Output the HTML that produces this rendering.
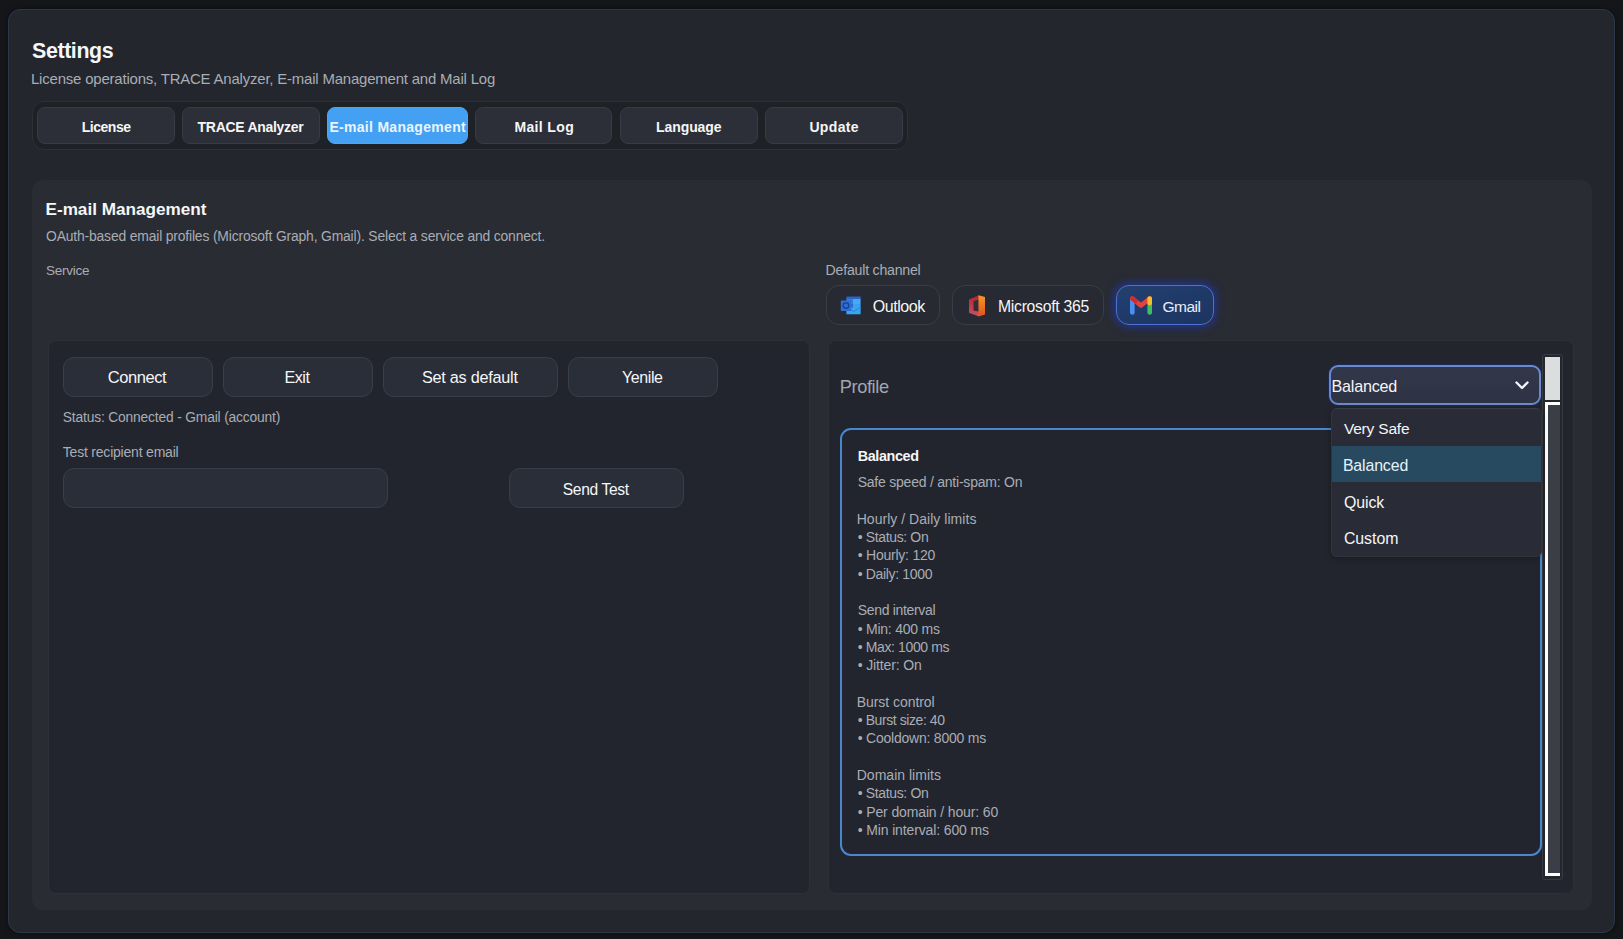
<!DOCTYPE html>
<html><head><meta charset="utf-8">
<style>
*{box-sizing:border-box;margin:0;padding:0}
html,body{width:1623px;height:939px;overflow:hidden;background:#151619;font-family:"Liberation Sans",sans-serif;}
.a{position:absolute}
.t{position:absolute;white-space:nowrap;line-height:1}
#main{left:8px;top:9px;width:1607px;height:924px;border-radius:12px;background:#23262d;border:1px solid #2d374b;box-shadow:0 0 4px rgba(0,0,0,.5)}
#tabs{left:31.5px;top:101px;width:876.5px;height:49px;border-radius:12px;background:#1e2126;border:1px solid #2d3037}
.tab{position:absolute;top:107px;height:37px;border-radius:8px;background:#2c2f37;border:1px solid #383b43}
.tab.on{background:#44a0f3;border-color:#4ba6f5}
#sec{left:32px;top:180px;width:1560px;height:730px;border-radius:10px;background:#292c33}
.sub{position:absolute;top:340px;height:553.5px;border-radius:8px;background:#22252d;border:1px solid #2d3038}
.btn{position:absolute;top:357px;height:40px;border-radius:11px;background:#2a2e38;border:1px solid #3a3e48}
.pill{position:absolute;top:285px;height:40px;border-radius:13px;background:#272a32;border:1px solid #3a3d46}
</style></head><body>
<div class="a" id="main"></div>

<div class="a" id="tabs"></div>
<div class="tab" style="left:37px;width:138px"></div>
<div class="tab" style="left:182px;width:138px"></div>
<div class="tab on" style="left:327px;width:141px"></div>
<div class="tab" style="left:475px;width:137px"></div>
<div class="tab" style="left:620px;width:138px"></div>
<div class="tab" style="left:765px;width:138px"></div>

<div class="a" id="sec"></div>

<!-- pills -->
<div class="pill" style="left:826px;width:114px"></div>
<div class="pill" style="left:952px;width:152px"></div>
<div class="pill" style="left:1116px;width:98px;background:linear-gradient(160deg,#22406e,#1d3462);border:1.5px solid #4d72d2;box-shadow:0 0 9px 2px rgba(30,60,225,.55)"></div>
<svg class="a" style="left:838px;top:294px" width="26" height="24" viewBox="0 0 26 24">
 <rect x="8.5" y="2.7" width="14" height="17.5" fill="#1f5fc4"/>
 <rect x="8.5" y="2.7" width="14" height="2.5" fill="#2c63c8"/>
 <rect x="15" y="5" width="7.5" height="5" fill="#4aa8ee"/>
 <rect x="8.5" y="5" width="6.5" height="5" fill="#2f7fde"/>
 <rect x="15" y="10" width="7.5" height="5" fill="#3ba3ee"/>
 <rect x="8.5" y="10" width="6.5" height="5" fill="#1d6fd8"/>
 <path d="M8.5 13.5 L22.5 13.5 L22.5 20.2 L8.5 20.2 Z" fill="#3aa6ec"/>
 <path d="M8.5 13.5 L15.5 17.5 L22.5 13.5" fill="none" stroke="#2b7fd6" stroke-width="1"/>
 <rect x="2.8" y="6.5" width="10.5" height="10.5" rx="0.8" fill="#2e6fd0"/>
 <circle cx="8" cy="11.6" r="2.8" fill="none" stroke="#163f9a" stroke-width="1.3"/>
</svg>
<svg class="a" style="left:966px;top:293px" width="22" height="26" viewBox="0 0 22 26">
 <defs>
  <linearGradient id="ofr" x1="0" y1="0" x2="0" y2="1"><stop offset="0" stop-color="#f29a2a"/><stop offset="1" stop-color="#e2521c"/></linearGradient>
  <linearGradient id="ofl" x1="0" y1="0" x2="0" y2="1"><stop offset="0" stop-color="#b3262a"/><stop offset="1" stop-color="#c9506e"/></linearGradient>
 </defs>
 <path d="M3 6.5 L13 2.3 L13 23.5 L3 19.8 Z" fill="url(#ofl)"/>
 <path d="M7.5 8 L13 6.5 L13 18.5 L7.5 17.5 Z" fill="#3a2a33"/>
 <path d="M12.5 2.3 L19 4 L19 21.5 L12.5 23.5 Z" fill="url(#ofr)"/>
</svg>
<svg class="a" style="left:1127px;top:294px" width="28" height="24" viewBox="0 0 28 24">
 <path d="M5.3 4.5 L14 11.5 L22.7 4.5" fill="none" stroke="#e8413b" stroke-width="4.6" stroke-linecap="round" stroke-linejoin="round"/>
 <path d="M5.3 5 L5.3 18.5" fill="none" stroke="#4a90ee" stroke-width="4.6" stroke-linecap="round"/>
 <path d="M22.7 5 L22.7 18.5" fill="none" stroke="#3fbf62" stroke-width="4.6" stroke-linecap="round"/>
 <path d="M22.7 4.5 L22.7 9" fill="none" stroke="#f5c02c" stroke-width="4.6" stroke-linecap="round"/>
 <path d="M5.3 4.5 L8.5 7" fill="none" stroke="#d6282f" stroke-width="4.6" stroke-linecap="round"/>
</svg>

<!-- subpanels -->
<div class="sub" style="left:48px;width:762px"></div>
<div class="sub" style="left:828px;width:746px"></div>

<!-- left buttons -->
<div class="btn" style="left:63px;width:150px"></div>
<div class="btn" style="left:223px;width:150px"></div>
<div class="btn" style="left:383px;width:175px"></div>
<div class="btn" style="left:568px;width:150px"></div>
<div class="btn" style="left:63px;top:468px;width:325px;height:40px"></div>
<div class="btn" style="left:509px;top:468px;width:175px;height:40px"></div>

<!-- right panel -->
<div class="a" id="card" style="left:840px;top:428px;width:702px;height:428px;border:2px solid #4787cf;border-radius:11px;background:#22252d"></div>

<!-- select -->
<div class="a" style="left:1329px;top:365px;width:212px;height:40px;border:2px solid #6e88cc;border-radius:9px;background:linear-gradient(#323849,#2d3344);box-shadow:0 0 0 1px rgba(25,45,110,.6)"></div>
<svg class="a" style="left:1514px;top:380px" width="16" height="11" viewBox="0 0 16 11"><path d="M2.5 2.5 L8 8 L13.5 2.5" fill="none" stroke="#f2f4f8" stroke-width="2.4" stroke-linecap="round" stroke-linejoin="round"/></svg>

<!-- scrollbar -->
<div class="a" style="left:1542px;top:354px;width:21px;height:526px;background:#24262b;border:1.5px solid #383a41;border-radius:3px"></div>
<div class="a" style="left:1544.5px;top:357px;width:15.5px;height:43px;background:#dcdddf"></div>
<div class="a" style="left:1545px;top:402px;width:15px;height:474px;background:#3c3e47;border-left:3px solid #fff;border-top:3px solid #fff"></div>
<div class="a" style="left:1545px;top:873px;width:15px;height:3px;background:#fff"></div>

<!-- dropdown -->
<div class="a" style="left:1330.5px;top:408px;width:211px;height:149px;background:#292c36;border:1px solid #31343d;border-top-color:#3a3d47;border-radius:6px;box-shadow:0 2px 6px rgba(0,0,0,.25)"></div>
<div class="a" style="left:1331.5px;top:446px;width:209px;height:36px;background:#274a60"></div>

<div class="t" style="left:32.00px;top:41.00px;font-size:21.40px;letter-spacing:-0.384px;color:#f5f6f8;font-weight:700;">Settings</div>
<div class="t" style="left:31.00px;top:72.00px;font-size:14.94px;letter-spacing:-0.186px;color:#a9adb5;">License operations, TRACE Analyzer, E-mail Management and Mail Log</div>
<div class="t" style="left:81.67px;top:120.00px;font-size:14.00px;letter-spacing:-0.450px;color:#f5f6f8;font-weight:700;">License</div>
<div class="t" style="left:197.60px;top:120.00px;font-size:14.00px;letter-spacing:-0.294px;color:#f5f6f8;font-weight:700;">TRACE Analyzer</div>
<div class="t" style="left:329.40px;top:120.00px;font-size:14.00px;letter-spacing:0.299px;color:#e9f5ff;font-weight:700;">E-mail Management</div>
<div class="t" style="left:514.40px;top:120.00px;font-size:14.00px;letter-spacing:0.368px;color:#f5f6f8;font-weight:700;">Mail Log</div>
<div class="t" style="left:656.00px;top:120.00px;font-size:14.00px;letter-spacing:-0.076px;color:#f5f6f8;font-weight:700;">Language</div>
<div class="t" style="left:809.40px;top:120.00px;font-size:14.00px;letter-spacing:0.348px;color:#f5f6f8;font-weight:700;">Update</div>
<div class="t" style="left:45.50px;top:201.00px;font-size:17.17px;letter-spacing:-0.013px;color:#f5f6f8;font-weight:700;">E-mail Management</div>
<div class="t" style="left:46.00px;top:230.00px;font-size:13.89px;letter-spacing:-0.160px;color:#a9adb5;">OAuth-based email profiles (Microsoft Graph, Gmail). Select a service and connect.</div>
<div class="t" style="left:46.00px;top:264.00px;font-size:13.53px;letter-spacing:-0.258px;color:#a9adb5;">Service</div>
<div class="t" style="left:825.60px;top:263.00px;font-size:14.15px;letter-spacing:-0.223px;color:#a9adb5;">Default channel</div>
<div class="t" style="left:872.66px;top:298.00px;font-size:16.05px;letter-spacing:-0.450px;color:#f5f6f8;">Outlook</div>
<div class="t" style="left:998.00px;top:299.00px;font-size:15.74px;letter-spacing:-0.275px;color:#f5f6f8;">Microsoft 365</div>
<div class="t" style="left:1162.38px;top:299.00px;font-size:15.50px;letter-spacing:-0.450px;color:#e6eefc;">Gmail</div>
<div class="t" style="left:107.80px;top:369.00px;font-size:16.50px;letter-spacing:-0.445px;color:#f5f6f8;">Connect</div>
<div class="t" style="left:284.38px;top:369.00px;font-size:16.20px;letter-spacing:-0.450px;color:#f5f6f8;">Exit</div>
<div class="t" style="left:422.00px;top:369.00px;font-size:16.26px;letter-spacing:-0.266px;color:#f5f6f8;">Set as default</div>
<div class="t" style="left:622.00px;top:370.00px;font-size:15.97px;letter-spacing:-0.402px;color:#f5f6f8;">Yenile</div>
<div class="t" style="left:62.75px;top:411.00px;font-size:13.82px;letter-spacing:-0.171px;color:#a9adb5;">Status: Connected - Gmail (account)</div>
<div class="t" style="left:62.75px;top:445.00px;font-size:14.01px;letter-spacing:-0.204px;color:#a9adb5;">Test recipient email</div>
<div class="t" style="left:562.80px;top:482.00px;font-size:15.62px;letter-spacing:-0.360px;color:#f5f6f8;">Send Test</div>
<div class="t" style="left:839.70px;top:378.00px;font-size:18.21px;letter-spacing:-0.362px;color:#a3a7af;">Profile</div>
<div class="t" style="left:1331.60px;top:378.00px;font-size:16.16px;letter-spacing:-0.255px;color:#f5f6f8;">Balanced</div>
<div class="t" style="left:857.70px;top:449.00px;font-size:14.40px;letter-spacing:-0.385px;color:#f5f6f8;font-weight:700;">Balanced</div>
<div class="t" style="left:1343.90px;top:421.00px;font-size:15.50px;letter-spacing:-0.186px;color:#f5f6f8;">Very Safe</div>
<div class="t" style="left:1342.90px;top:458.00px;font-size:15.90px;letter-spacing:-0.132px;color:#e6f2fb;">Balanced</div>
<div class="t" style="left:1343.90px;top:495.00px;font-size:15.90px;letter-spacing:-0.068px;color:#f5f6f8;">Quick</div>
<div class="t" style="left:1343.90px;top:531.00px;font-size:15.90px;letter-spacing:-0.042px;color:#f5f6f8;">Custom</div>
<div class="t" style="left:857.70px;top:475.00px;font-size:14.00px;letter-spacing:-0.226px;color:#a9adb5;">Safe speed / anti-spam: On</div>
<div class="t" style="left:856.70px;top:512.00px;font-size:14.00px;letter-spacing:0.034px;color:#a9adb5;">Hourly / Daily limits</div>
<div class="t" style="left:857.70px;top:530.00px;font-size:14.00px;letter-spacing:-0.359px;color:#a9adb5;">• Status: On</div>
<div class="t" style="left:857.70px;top:548.00px;font-size:14.00px;letter-spacing:-0.233px;color:#a9adb5;">• Hourly: 120</div>
<div class="t" style="left:857.70px;top:567.00px;font-size:14.00px;letter-spacing:-0.337px;color:#a9adb5;">• Daily: 1000</div>
<div class="t" style="left:857.70px;top:603.00px;font-size:14.00px;letter-spacing:-0.317px;color:#a9adb5;">Send interval</div>
<div class="t" style="left:857.70px;top:622.00px;font-size:14.00px;letter-spacing:-0.237px;color:#a9adb5;">• Min: 400 ms</div>
<div class="t" style="left:857.70px;top:640.00px;font-size:14.00px;letter-spacing:-0.370px;color:#a9adb5;">• Max: 1000 ms</div>
<div class="t" style="left:857.70px;top:658.00px;font-size:14.00px;letter-spacing:-0.136px;color:#a9adb5;">• Jitter: On</div>
<div class="t" style="left:856.70px;top:695.00px;font-size:14.00px;letter-spacing:-0.048px;color:#a9adb5;">Burst control</div>
<div class="t" style="left:857.70px;top:713.00px;font-size:14.00px;letter-spacing:-0.421px;color:#a9adb5;">• Burst size: 40</div>
<div class="t" style="left:857.70px;top:731.00px;font-size:14.00px;letter-spacing:-0.224px;color:#a9adb5;">• Cooldown: 8000 ms</div>
<div class="t" style="left:856.70px;top:768.00px;font-size:14.00px;letter-spacing:0.024px;color:#a9adb5;">Domain limits</div>
<div class="t" style="left:857.70px;top:786.00px;font-size:14.00px;letter-spacing:-0.350px;color:#a9adb5;">• Status: On</div>
<div class="t" style="left:857.70px;top:805.00px;font-size:14.00px;letter-spacing:-0.129px;color:#a9adb5;">• Per domain / hour: 60</div>
<div class="t" style="left:857.70px;top:823.00px;font-size:14.00px;letter-spacing:-0.131px;color:#a9adb5;">• Min interval: 600 ms</div>
</body></html>
